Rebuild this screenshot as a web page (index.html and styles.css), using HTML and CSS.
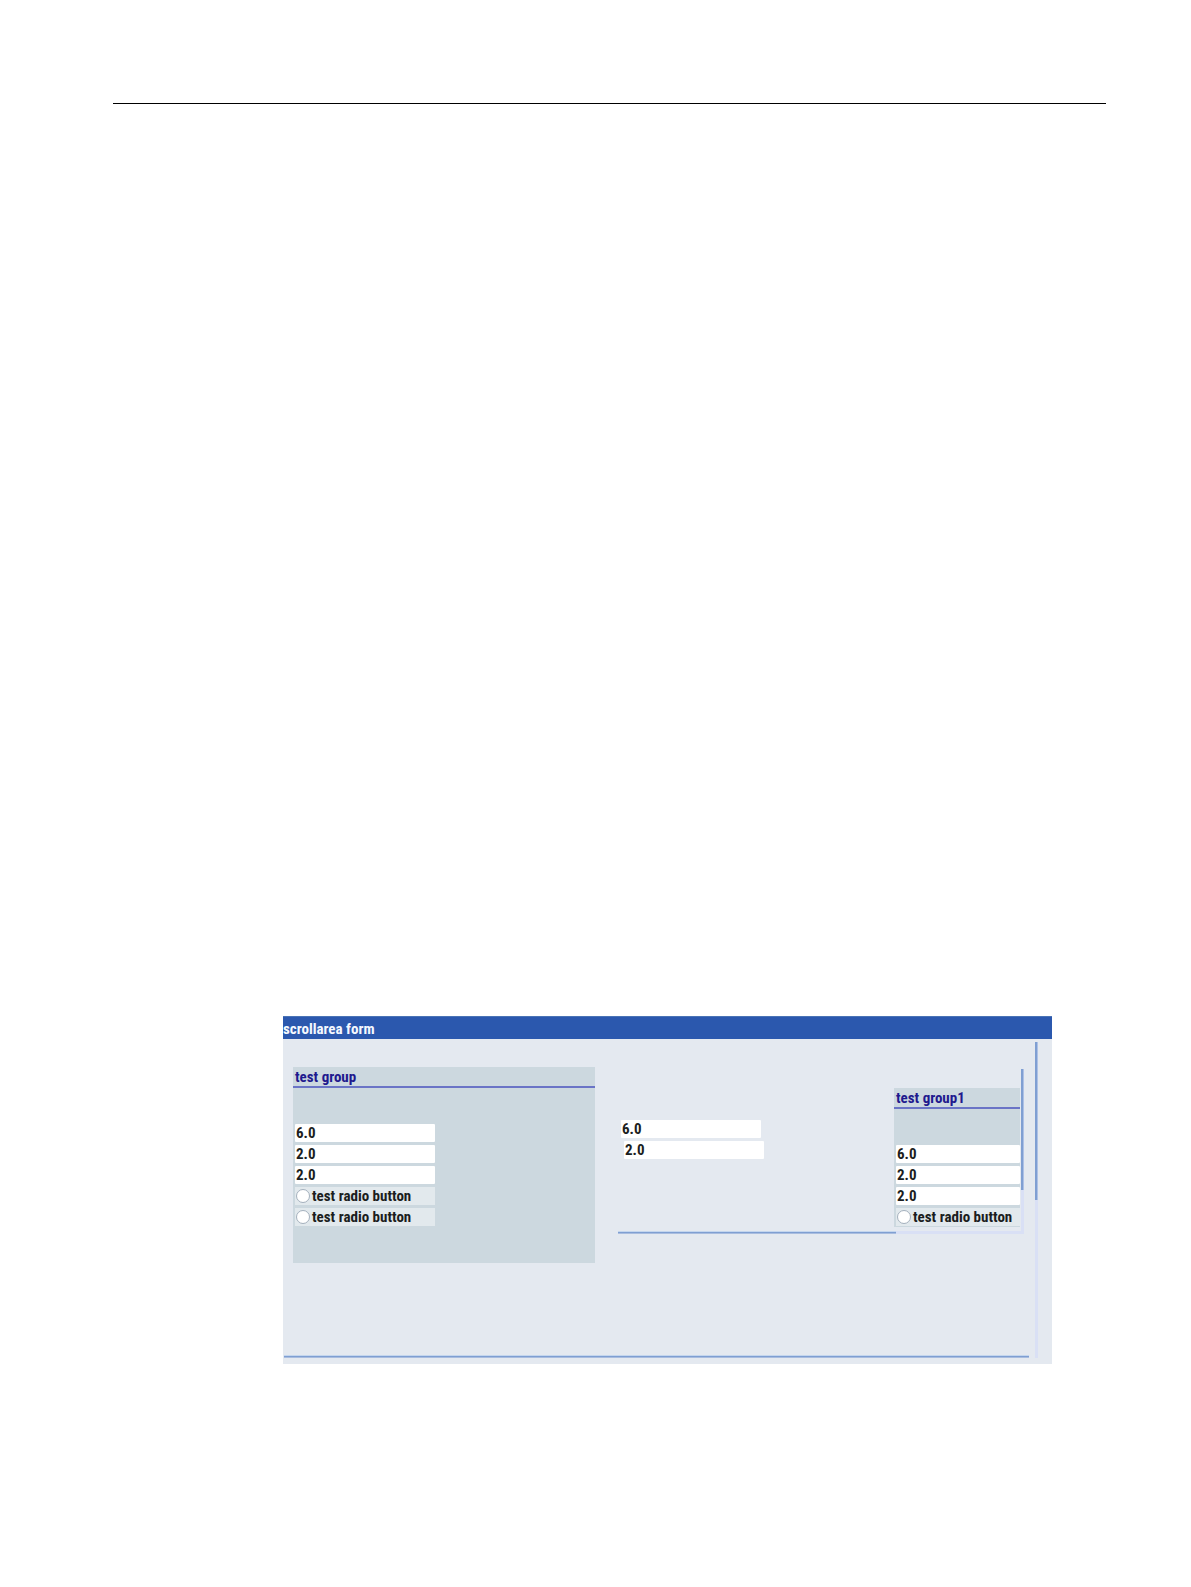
FILE: index.html
```html
<!DOCTYPE html>
<html lang="en">
<head>
<meta charset="utf-8">
<meta name="viewport" content="width=device-width, initial-scale=1">
<title>scrollarea form</title>
<link rel="stylesheet" href="styles.css">
</head>
<body>
<main class="page">
  <hr class="page-rule">
  <form class="form">
    <h1 class="form-title">scrollarea form</h1>
    <div class="form-body">
      <div class="scroll-area">
        <div class="scroll-content outer-content">
          <fieldset class="group group-main">
            <legend class="group-title">test group</legend>
            <div class="fields">
              <input class="field" type="text" value="6.0" aria-label="Value 1">
              <input class="field" type="text" value="2.0" aria-label="Value 2">
              <input class="field" type="text" value="2.0" aria-label="Value 3">
              <label class="radio-row"><input class="radio" type="radio" name="group">test radio button</label>
              <label class="radio-row"><input class="radio" type="radio" name="group">test radio button</label>
            </div>
          </fieldset>
          <div class="scroll-area inner-area">
            <div class="scroll-content inner-content">
              <div class="fields loose-fields">
                <input class="field" type="text" value="6.0" aria-label="Value 4">
                <input class="field field-indented" type="text" value="2.0" aria-label="Value 5">
              </div>
              <fieldset class="group group-side">
                <legend class="group-title">test group1</legend>
                <div class="fields">
                  <input class="field" type="text" value="6.0" aria-label="Value 6">
                  <input class="field" type="text" value="2.0" aria-label="Value 7">
                  <input class="field" type="text" value="2.0" aria-label="Value 8">
                  <label class="radio-row"><input class="radio" type="radio" name="group1">test radio button</label>
                </div>
              </fieldset>
            </div>
            <div class="bar-vertical"><div class="thumb inner-thumb-v"></div></div>
            <div class="bar-horizontal"><div class="thumb inner-thumb-h"></div></div>
          </div>
        </div>
        <div class="bar-vertical"><div class="thumb outer-thumb-v"></div></div>
        <div class="bar-horizontal"><div class="thumb outer-thumb-h"></div></div>
      </div>
    </div>
  </form>
</main>
</body>
</html>
```
FILE: styles.css
```css
* {
  box-sizing: border-box;
}

body {
  margin: 0;
  background: #fff;
  color: #1b1d20;
  font: bold 15px/18px "Roboto Condensed", "Liberation Sans Narrow", Roboto, sans-serif;
  font-feature-settings: "zero";
}

.page {
  padding: 103px 85px 223px 113px;
}

.page-rule {
  height: 1px;
  margin: 0;
  border: 0;
  background: #000;
}

.form {
  margin: 912px 54px 0 170px;
  background: #e4e9f0;
}

.form-title {
  margin: 0;
  padding: 3px 0 1px;
  border-top: 1px solid #4a73b5;
  background: #2b58ae;
  color: #f4f8ff;
  font-size: 15px;
  line-height: 18px;
}

.form-body {
  padding: 3px 14px 6px 0;
}

/* Content with a thin scroll bar on its right and one below it */
.scroll-area {
  display: grid;
  grid-template-columns: minmax(0, 1fr) 3px;
}

.scroll-content {
  display: flex;
  align-items: flex-start;
}

.outer-content {
  gap: 23px;
  min-height: 313px;
  padding: 25px 11px 0 10px;
}

.bar-vertical {
  grid-column: 2;
  grid-row: 1 / 3;
  background: #d9e0f5;
}

.bar-horizontal {
  grid-column: 1;
  grid-row: 2;
  height: 3px;
}

.thumb {
  background: #7f9fd2;
}

.bar-vertical .thumb {
  border-right: 1px solid #adc1e6;
}

.bar-horizontal .thumb {
  height: 3px;
  border-top: 1px solid #c4d6ee;
  border-bottom: 1px solid #a9bddf;
}

.outer-thumb-v {
  height: 50%;
}

.outer-thumb-h {
  margin: 0 6px 0 1px;
}

.group {
  min-width: 0;
  margin: 0;
  padding: 0;
  border: 0;
  background: #ccd8df;
}

.group-main {
  flex: 0 1 302px;
  min-height: 196px;
}

.group-side {
  flex: 0 0 126px;
  padding-bottom: 1px;
}

.group-title {
  float: left;
  width: 100%;
  padding: 1px 2px 0;
  border-bottom: 2px solid #6a74c6;
  color: #1f1a8e;
}

.group .fields {
  clear: both;
  padding: 36px 0 0 2px;
}

.fields {
  display: flex;
  flex-direction: column;
  gap: 3px;
}

.field,
.radio-row {
  width: 140px;
  max-width: 100%;
  height: 18px;
}

.field {
  padding: 0 1px;
  border: 0;
  border-radius: 1px;
  outline: 0;
  background: #fff;
  color: inherit;
  font: inherit;
  font-feature-settings: inherit;
}

.radio-row {
  display: flex;
  align-items: center;
  gap: 2px;
  padding-left: 1px;
  background: #e2e9ed;
  white-space: nowrap;
}

.radio {
  appearance: none;
  flex: none;
  width: 14px;
  height: 14px;
  margin: 0;
  border: 1px solid #a4b0bd;
  border-radius: 50%;
  background: #fff;
}

.inner-area {
  flex: 1;
  margin-top: 2px;
}

.inner-content {
  justify-content: space-between;
  min-height: 162px;
  padding-right: 1px;
}

.loose-fields {
  padding: 51px 0 0 3px;
}

.field-indented {
  margin-left: 3px;
}

.inner-area .group-side {
  margin-top: 19px;
}

.inner-area > .bar-horizontal {
  background: #d9e0f5;
}

.inner-thumb-v {
  height: 121px;
}

.inner-thumb-h {
  width: 69%;
}
```
